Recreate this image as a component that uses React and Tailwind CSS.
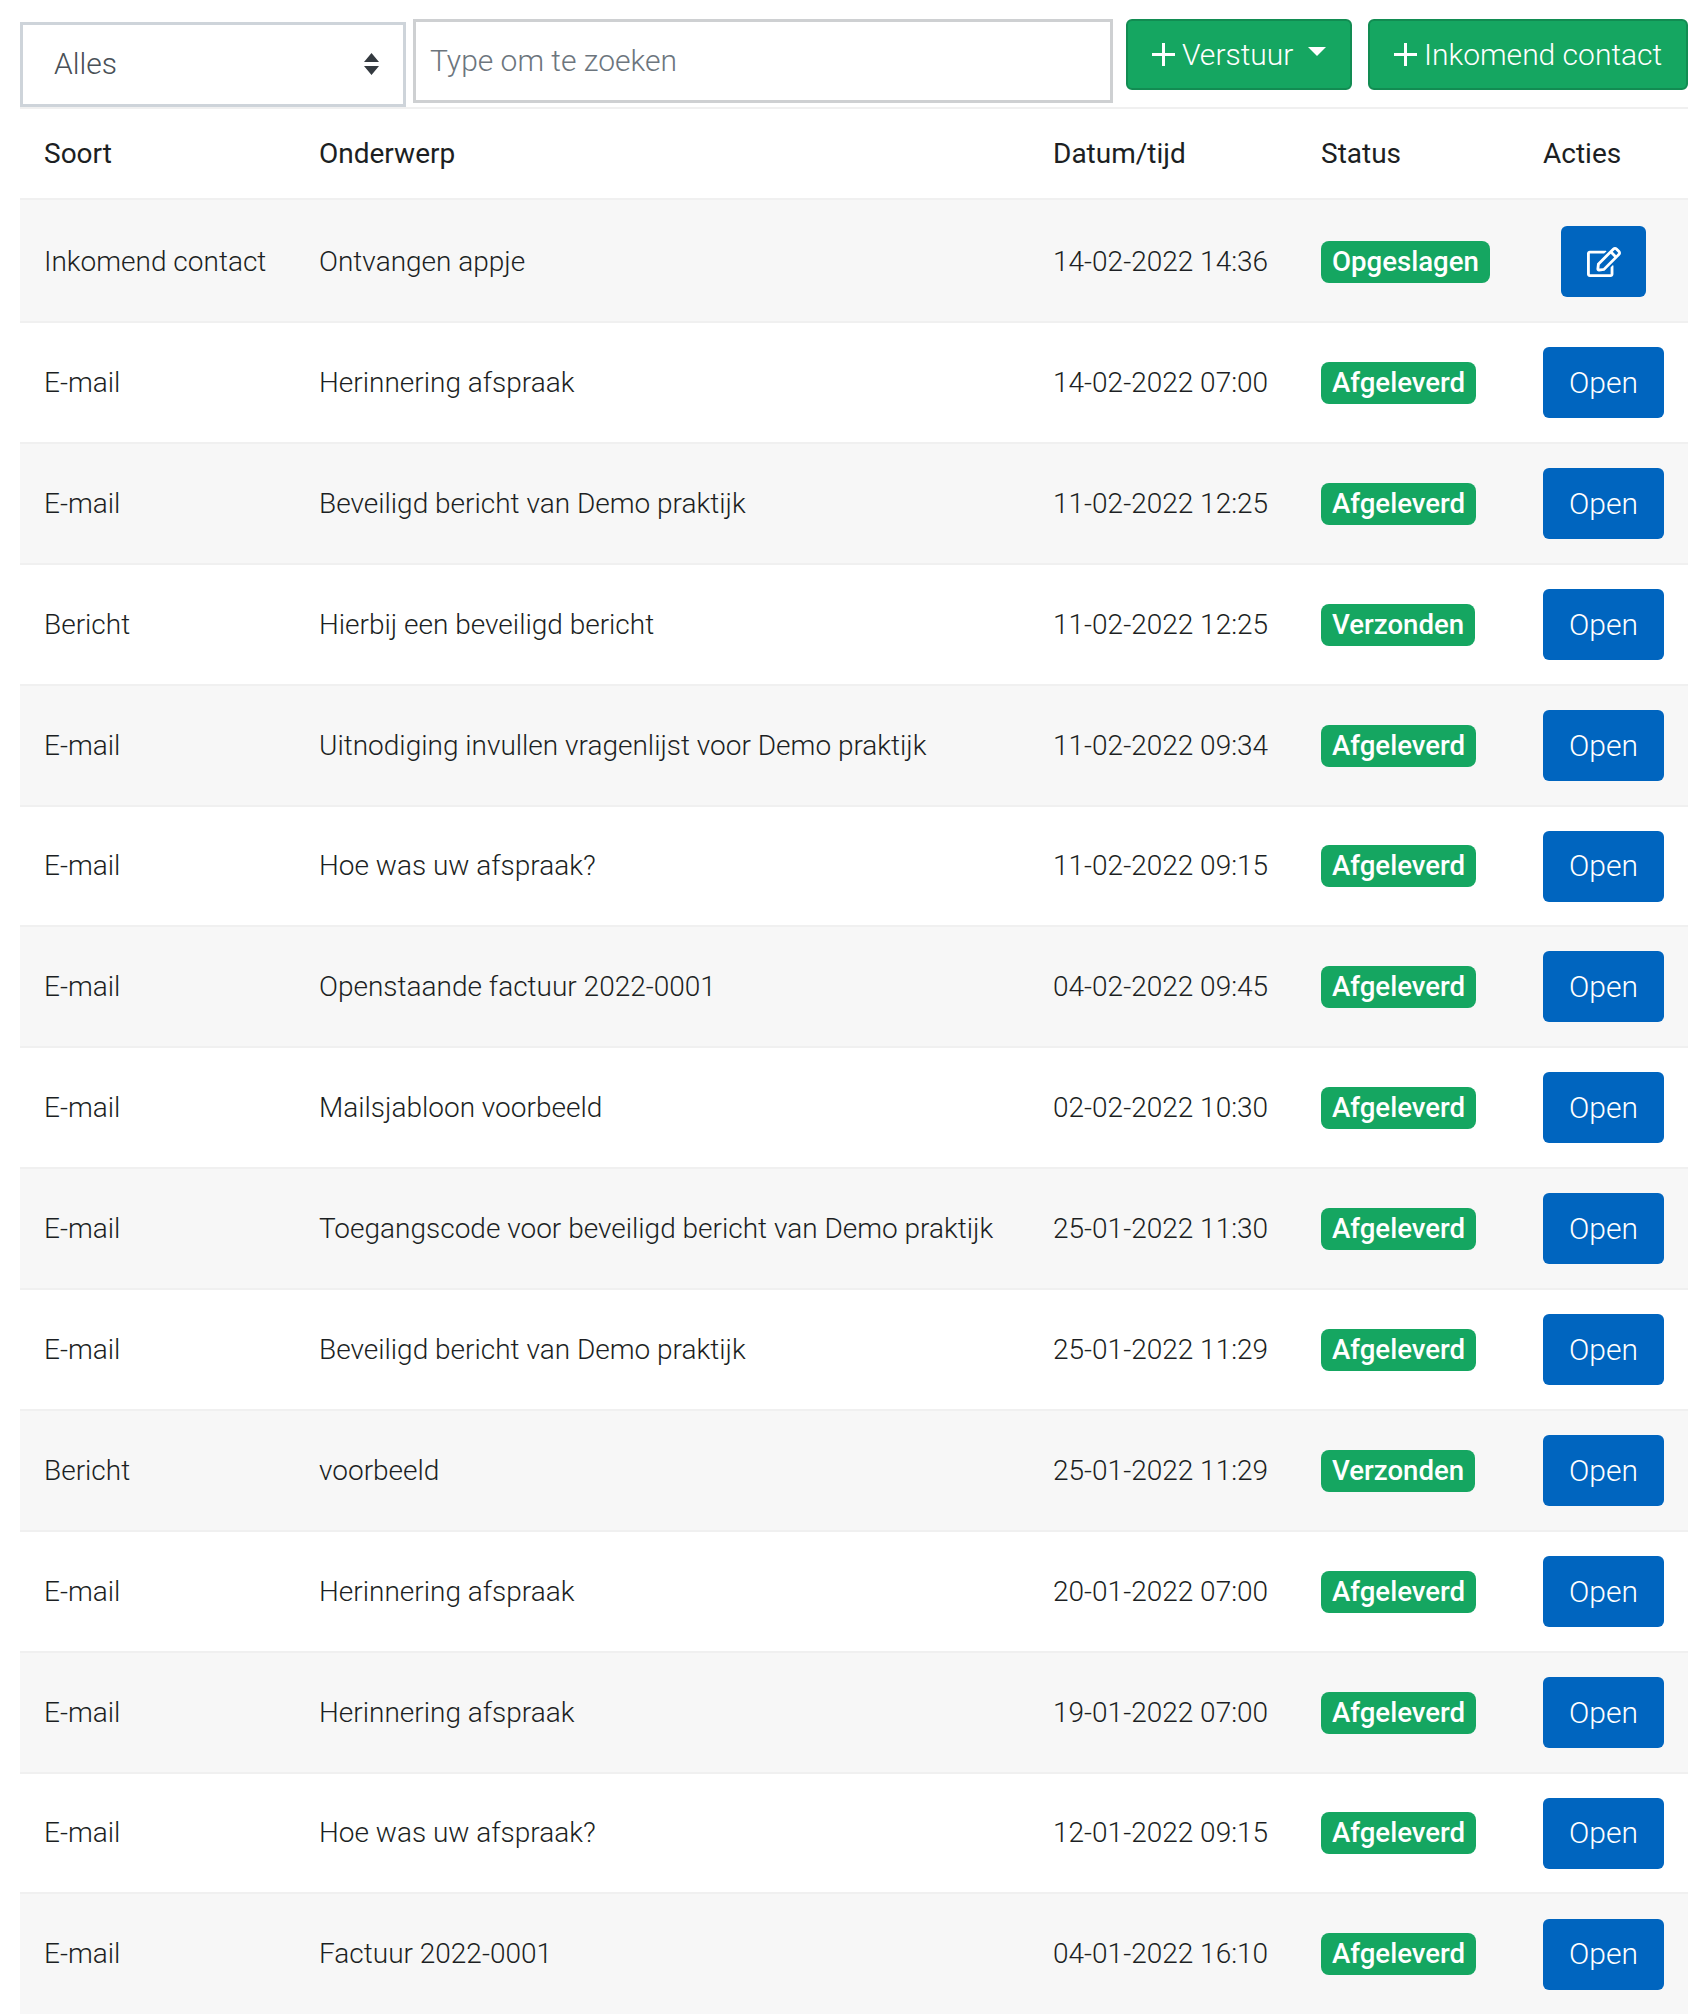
import React from "react";
import { FaRegEdit } from "react-icons/fa";

const rows = [
  ["Inkomend contact", "Ontvangen appje", "14-02-2022 14:36", "Opgeslagen", true],
  ["E-mail", "Herinnering afspraak", "14-02-2022 07:00", "Afgeleverd"],
  ["E-mail", "Beveiligd bericht van Demo praktijk", "11-02-2022 12:25", "Afgeleverd"],
  ["Bericht", "Hierbij een beveiligd bericht", "11-02-2022 12:25", "Verzonden"],
  ["E-mail", "Uitnodiging invullen vragenlijst voor Demo praktijk", "11-02-2022 09:34", "Afgeleverd"],
  ["E-mail", "Hoe was uw afspraak?", "11-02-2022 09:15", "Afgeleverd"],
  ["E-mail", "Openstaande factuur 2022-0001", "04-02-2022 09:45", "Afgeleverd"],
  ["E-mail", "Mailsjabloon voorbeeld", "02-02-2022 10:30", "Afgeleverd"],
  ["E-mail", "Toegangscode voor beveiligd bericht van Demo praktijk", "25-01-2022 11:30", "Afgeleverd"],
  ["E-mail", "Beveiligd bericht van Demo praktijk", "25-01-2022 11:29", "Afgeleverd"],
  ["Bericht", "voorbeeld", "25-01-2022 11:29", "Verzonden"],
  ["E-mail", "Herinnering afspraak", "20-01-2022 07:00", "Afgeleverd"],
  ["E-mail", "Herinnering afspraak", "19-01-2022 07:00", "Afgeleverd"],
  ["E-mail", "Hoe was uw afspraak?", "12-01-2022 09:15", "Afgeleverd"],
  ["E-mail", "Factuur 2022-0001", "04-01-2022 16:10", "Afgeleverd"],
];

function Plus() {
  return (
    <svg width="23" height="23" viewBox="0 0 23 23" className="mr-[7px] shrink-0">
      <path d="M11.5 0v23M0 11.5h23" stroke="#fff" strokeWidth="3" />
    </svg>
  );
}

function rowHeight(i) {
  if (i === 0) return "h-[123px]";
  if (i === 5 || i === 13) return "h-[120px]";
  return "h-[121px]";
}

export default function App() {
  return (
    <div className="pl-[20px] pr-[18px] font-['Roboto',sans-serif] font-light text-[28px] leading-[42px] text-[#1c1f23] bg-white">
      <div className="flex items-start pt-[19px] h-[107px] text-[30px]">
        <div className="mt-[3px] w-[386px] h-[85px] border-[3px] border-[#ced4da] flex items-center justify-between pl-[31px] pr-[23px] pb-[1px] text-[#495057]">
          <span>Alles</span>
          <svg width="17" height="24" viewBox="0 0 17 24">
            <path d="M8.5 1 16 10H1zM8.5 23 1 14h15z" fill="#343a40" />
          </svg>
        </div>
        <div className="ml-[7px] w-[700px] h-[84px] border-[3px] border-[#ced0d2] flex items-center pl-[14px] text-[#6c757d]">
          Type om te zoeken
        </div>
        <div className="ml-[13px] w-[226px] h-[71px] rounded-[6px] border-2 border-[#128c52] bg-[#15a661] text-white flex items-center pl-[24px]">
          <Plus />
          <span>Verstuur</span>
          <span className="ml-[15px] mb-[6px] border-x-[9px] border-x-transparent border-t-[9px] border-t-white"></span>
        </div>
        <div className="ml-[16px] w-[320px] h-[71px] rounded-[6px] border-2 border-[#128c52] bg-[#15a661] text-white flex items-center pl-[24px]">
          <Plus />
          <span>Inkomend contact</span>
        </div>
      </div>
      <table className="w-full table-fixed border-collapse border-t-2 border-t-[#f0f0f0]">
        <colgroup>
          <col className="w-[275px]" />
          <col className="w-[734px]" />
          <col className="w-[268px]" />
          <col className="w-[222px]" />
          <col />
        </colgroup>
        <thead>
          <tr className="h-[91px]">
            {["Soort", "Onderwerp", "Datum/tijd", "Status", "Acties"].map((h) => (
              <th key={h} className="px-[24px] pt-[1px] text-left font-normal">{h}</th>
            ))}
          </tr>
        </thead>
        <tbody>
          {rows.map((r, i) => (
            <tr key={i} className={`${rowHeight(i)} border-t-2 border-t-[#f0f0f0] ${i % 2 === 0 ? "bg-[#f7f7f7]" : "bg-white"}`}>
              <td className={i === 0 ? "px-[24px] pt-[2px]" : "px-[24px]"}>{r[0]}</td>
              <td className={i === 0 ? "px-[24px] pt-[2px] whitespace-nowrap" : "px-[24px] whitespace-nowrap"}>{r[1]}</td>
              <td className={i === 0 ? "px-[24px] pt-[2px] whitespace-nowrap" : "px-[24px] whitespace-nowrap"}>{r[2]}</td>
              <td className={i === 0 ? "px-[24px] pt-[2px]" : "px-[24px]"}>
                <span className="inline-flex items-center h-[42px] px-[11px] rounded-[8px] bg-[#15a661] text-white font-medium text-[27.6px]">{r[3]}</span>
              </td>
              <td className={i === 0 ? "px-[24px] pt-[2px]" : "px-[24px]"}>
                <div className="flex justify-center w-[121px] text-[30px]">
                  {r[4] ? (
                    <div className="w-[85px] h-[71px] rounded-[6px] bg-[#0065bf] text-white flex items-center justify-center">
                      <FaRegEdit size={34} />
                    </div>
                  ) : (
                    <div className="w-[121px] h-[71px] rounded-[6px] bg-[#0065bf] text-white flex items-center justify-center">Open</div>
                  )}
                </div>
              </td>
            </tr>
          ))}
        </tbody>
      </table>
    </div>
  );
}
